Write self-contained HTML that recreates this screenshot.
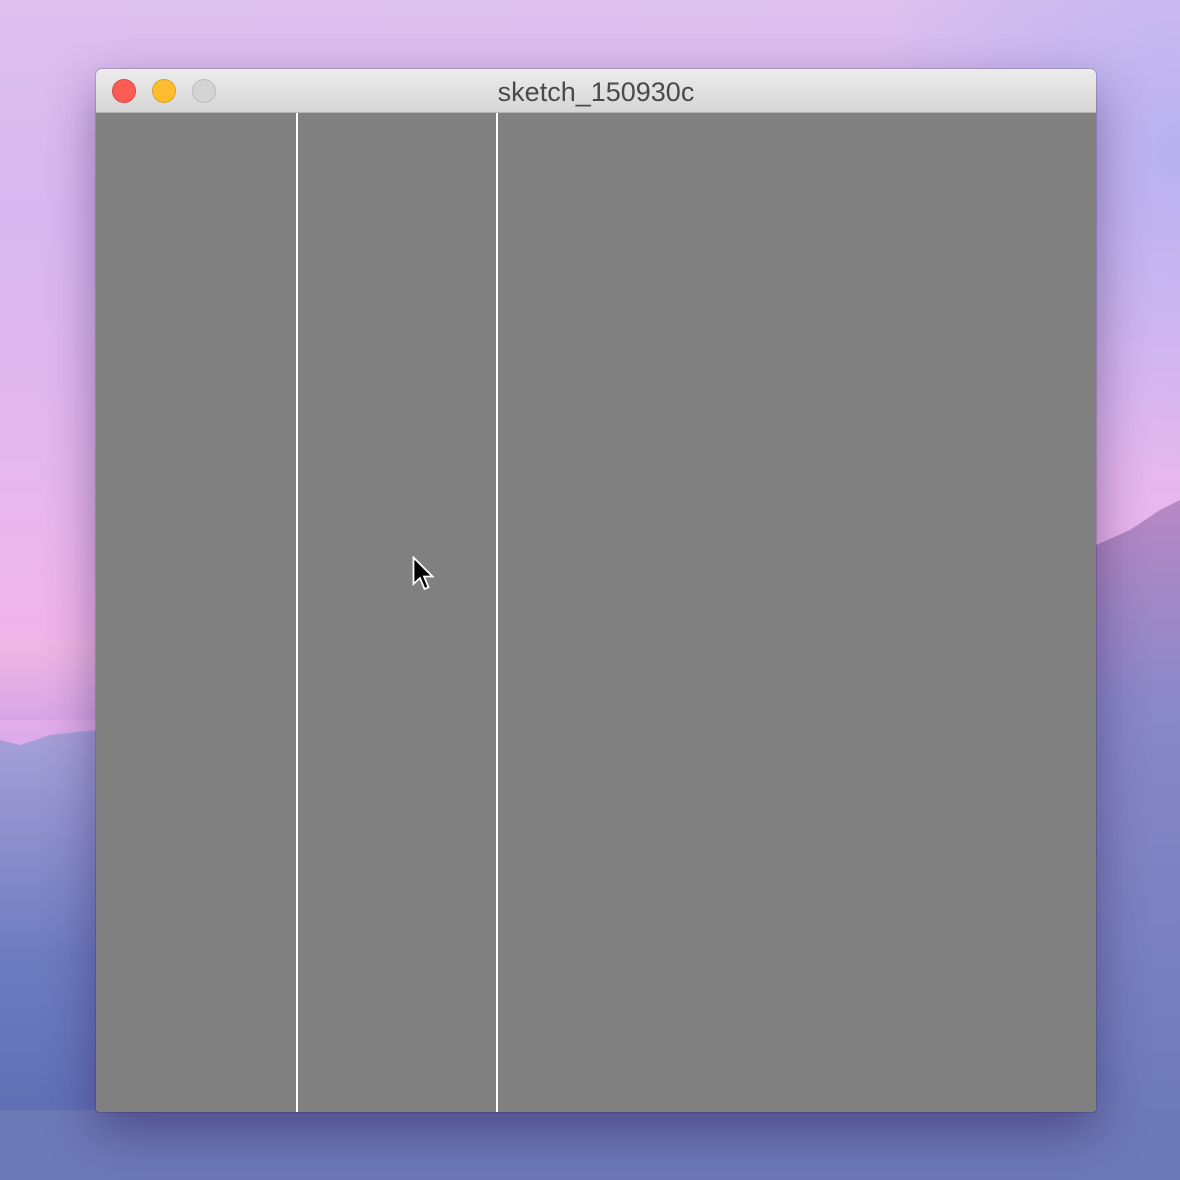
<!DOCTYPE html>
<html><head><style>
html,body{margin:0;padding:0;width:1180px;height:1180px;overflow:hidden}
body{position:relative;background:linear-gradient(180deg,#dcc0ee 0%,#d8b8f0 18%,#e4b8ee 38%,#f0b4ea 55%,#d8a8ea 65%,#c8a2e6 75%)}
.win{position:absolute;left:96px;top:69px;width:1000px;height:1043px;border-radius:6px 6px 4px 4px;overflow:hidden;box-shadow:0 20px 50px rgba(40,20,80,.45),0 0 0 1px rgba(0,0,0,.15)}
.tb{height:43px;background:linear-gradient(#ececec,#d6d6d6);border-bottom:1px solid #b4b4b4;position:relative;font:27px "Liberation Sans",sans-serif;color:#4a4a4a;text-align:center;line-height:46px}
.b{position:absolute;top:10px;width:24px;height:24px;border-radius:50%;box-sizing:border-box}
.cv{position:absolute;top:44px;left:0;right:0;bottom:0;background:#808080}
.ln{position:absolute;top:0;bottom:0;width:2px;background:#fff}
</style></head><body>
<svg width="1180" height="1180" style="position:absolute;left:0;top:0">
<defs>
<linearGradient id="m" x1="0" y1="0" x2="0" y2="1"><stop offset="0" stop-color="#a8a0d8"/><stop offset=".5" stop-color="#6e7cc0"/><stop offset="1" stop-color="#5a6ab0"/></linearGradient>
<linearGradient id="r" x1="0" y1="0" x2="0" y2="1"><stop offset="0" stop-color="#b888c4"/><stop offset=".3" stop-color="#8a88c8"/><stop offset="1" stop-color="#6a78b8"/></linearGradient>
<linearGradient id="h" x1="0" y1="0" x2="0" y2="1"><stop offset="0" stop-color="#f0b8e4"/><stop offset="1" stop-color="#d8a6e8"/></linearGradient>
<radialGradient id="tr" cx="1180" cy="150" r="320" gradientUnits="userSpaceOnUse"><stop offset="0" stop-color="#b0b0f0" stop-opacity=".8"/><stop offset="1" stop-color="#b0b0f0" stop-opacity="0"/></radialGradient>
</defs>
<rect x="800" y="0" width="380" height="500" fill="url(#tr)"/>
<rect x="0" y="640" width="1180" height="80" fill="url(#h)"/>
<polygon points="0,740 20,745 50,735 96,730 96,1180 0,1180" fill="url(#m)"/>
<polygon points="1096,545 1130,530 1160,510 1180,500 1180,1180 1096,1180" fill="url(#r)"/>
<rect x="0" y="1110" width="1180" height="70" fill="#6e7ab8"/>
</svg>
<div class="win">
<div class="tb">sketch_150930c
<div class="b" style="left:16px;background:#fd5c55;border:1px solid #e0443e"></div>
<div class="b" style="left:56px;background:#fdbd2e;border:1px solid #dea123"></div>
<div class="b" style="left:96px;background:#d4d4d4;border:1px solid #bcbcbc"></div>
</div>
<div class="cv">
<div class="ln" style="left:200px"></div>
<div class="ln" style="left:400px"></div>
<svg style="position:absolute;left:316px;top:443px" width="30" height="42"><path d="M1.5 1.5 L1.5 28 L8 22 L12.5 33 L16.5 31.3 L12 20.5 L20.5 20.5 Z" fill="#000" stroke="#fff" stroke-width="1.8"/></svg>
</div>
</div>
</body></html>
